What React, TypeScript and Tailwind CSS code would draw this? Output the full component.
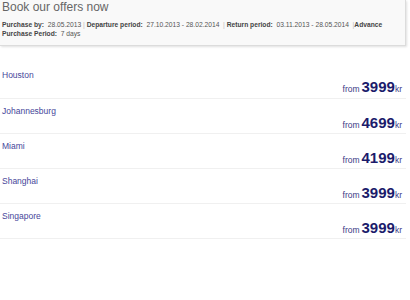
import React from "react";

const rows = [
  { city: "Houston", price: "3999" },
  { city: "Johannesburg", price: "4699" },
  { city: "Miami", price: "4199" },
  { city: "Shanghai", price: "3999" },
  { city: "Singapore", price: "3999" },
];

export default function App() {
  return (
    <div className="w-[410px] h-[300px] bg-white overflow-hidden" style={{ fontFamily: '"Liberation Sans", Arial, sans-serif' }}>
      <div className="w-[406px] h-[46px] bg-[#f9f9f9] border-r border-b border-[#dcdcdc] shadow-[1px_1px_2px_rgba(0,0,0,0.12)] pl-[2px] pt-0">
        <div className="text-[12px] leading-[14px] text-[#666]">Book our offers now</div>
        <div className="mt-[6px] text-[6.7px] leading-[9px] text-[#555] pr-[6px] whitespace-pre-wrap">
          <b className="text-[#444]">Purchase by:</b>{"  28.05.2013 "}<span className="text-[#bbb]">|</span>{" "}<b className="text-[#444]">Departure period:</b>{"  27.10.2013 - 28.02.2014 "}<span className="text-[#bbb]">{" |"}</span>{" "}<b className="text-[#444]">Return period:</b>{"  03.11.2013 - 28.05.2014 "}<span className="text-[#bbb]">{" |"}</span><b className="text-[#444]">Advance Purchase Period:</b>{"  7 days"}
        </div>
      </div>
      <div className="mt-[17px] w-[406px]">
        {rows.map((r, i) => (
          <div key={r.city} className={`h-[35px] flex flex-col pl-[2px] pr-[4px] ${i === 0 ? "" : "border-t border-[#f0f0f0]"}`}>
            <div className="pt-[7px] text-[8.5px] leading-[10px] text-[#46469a]">{r.city}</div>
            <div className="flex justify-end items-baseline text-[#1b1b6b] -mt-[1px]">
              <span className="text-[8.5px] mr-[2px] text-[#3a3a85]">from</span>
              <span className="text-[15px] font-bold leading-[16px]">{r.price}</span>
              <span className="text-[8.5px] text-[#3a3a85]">kr</span>
            </div>
          </div>
        ))}
        <div className="border-t border-[#f0f0f0]" />
      </div>
    </div>
  );
}
